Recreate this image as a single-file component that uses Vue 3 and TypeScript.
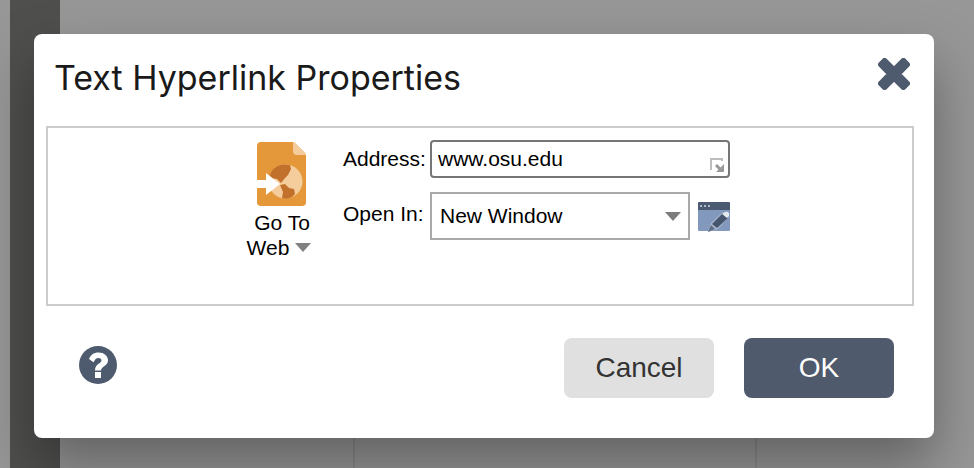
<script setup lang="ts">
import { ref } from 'vue'

const address = ref<string>('www.osu.edu')
const target = ref<string>('New Window')
const targets: string[] = ['New Window', 'Same Window']
</script>

<template>
  <div class="page">
    <div class="backdrop" aria-hidden="true">
      <div class="rail"></div>
      <div class="column first"></div>
      <div class="column second"></div>
      <div class="column last"></div>
    </div>

    <form class="dialog" role="dialog" aria-labelledby="dialog-title" @submit.prevent>
      <header class="header">
        <h1 id="dialog-title" class="title">Text Hyperlink Properties</h1>
        <button class="close" type="button" aria-label="Close">
          <svg width="32" height="32" viewBox="0 0 32 32">
            <path d="M6.500 3L16 12.300L25.500 3L29 6.500L19.700 16L29 25.500L25.500 29L16 19.700L6.500 29L3 25.500L12.300 16L3 6.500Z" fill="#4e5b6e" stroke="#4e5b6e" stroke-width="6" stroke-linejoin="round" />
          </svg>
        </button>
      </header>

      <section class="panel">
        <button class="action" type="button">
          <svg class="action-icon" width="50" height="64" viewBox="0 0 50 64">
            <path d="M4 0H37L49 12V60Q49 64 45 64H4Q0 64 0 60V4Q0 0 4 0Z" fill="#e5983a" />
            <path d="M36 0H37L49 12V13H40Q36 13 36 9Z" fill="#f5cc9b" />
            <circle cx="28.500" cy="39.500" r="17" fill="#f5cc9b" />
            <path d="M12 36C14 26 22 20.500 33 23L34 27L31 33L28 36L24 41L20 37Z" fill="#c1712b" />
            <path d="M23 43L28 42L32 46L37 47L38 52L35 55Q30 58 25 56L26 50Z" fill="#c1712b" />
            <path d="M0 38H9V31L23 42L9 53V46H0Z" fill="#fff" />
          </svg>
          <span>Go To</span>
          <span class="action-line">Web
            <svg width="16" height="9" viewBox="0 0 16 9"><path d="M0 0H16L8 9Z" fill="#808080" /></svg>
          </span>
        </button>

        <div class="fields">
          <div class="field">
            <label for="address">Address:</label>
            <div class="address-box">
              <input id="address" v-model="address" type="text" />
              <svg class="grip" width="16" height="16" viewBox="0 0 16 16">
                <path d="M2 13V2H13V4" stroke="#bdbdbd" stroke-width="2" fill="none" />
                <path d="M7 8L12 13" stroke="#999" stroke-width="3" />
                <path d="M15 7V15H7Z" fill="#999" />
              </svg>
            </div>
          </div>
          <div class="field open">
            <label for="open-in">Open In:</label>
            <div class="select-box">
              <select id="open-in" v-model="target">
                <option v-for="item in targets" :key="item">{{ item }}</option>
              </select>
              <svg class="arrow" width="16" height="9" viewBox="0 0 16 9"><path d="M0 0H16L8 9Z" fill="#7c7c7c" /></svg>
            </div>
            <button class="edit" type="button" aria-label="Edit window">
              <svg width="32" height="32" viewBox="0 0 32 32">
                <rect y="1" width="32" height="29" rx="1" fill="#8299bd" />
                <path d="M1 1H31L32 2V9H0V2Z" fill="#4b5a70" />
                <path d="M2 4H4V6H2ZM6 4H8V6H6ZM10 4H12V6H10Z" fill="#aeb8c8" />
                <path d="M13 22L25 11L31 16L20 28L10 31Z" fill="#a9b7cd" />
                <path d="M14 23L25 12L30 17L19 27Z" fill="#46566e" />
                <path d="M10 31L13 24L17 28Z" fill="#5e6d83" />
                <path d="M24 13L27 11Q29 10 31 12L31 15L29 17Z" fill="#e5e8ed" />
              </svg>
            </button>
          </div>
        </div>
      </section>

      <footer class="footer">
        <button class="help" type="button" aria-label="Help">
          <svg width="38" height="38" viewBox="0 0 38 38">
            <circle cx="19" cy="19" r="19" fill="#4e5b6e" />
            <path d="M10 13C12 8.500 15 6.500 19.500 6.500C25 6.500 29 10 29 14.500C29 20 22 20.500 22 24.500H16C16 17.500 22.500 17.500 22.500 14.500C22.500 13 21.500 12 19.300 12C17.300 12 16 13.500 14.500 16.300Z" fill="#fff" />
            <path d="M16 26H22V32H16Z" fill="#fff" />
          </svg>
        </button>
        <button class="button cancel" type="button">Cancel</button>
        <button class="button ok" type="submit">OK</button>
      </footer>
    </form>
  </div>
</template>

<style>
body {
  margin: 0;
}
</style>

<style scoped>
.page {
  position: relative;
  box-sizing: border-box;
  min-height: 100vh;
  padding: 34px 40px 30px 34px;
  overflow: hidden;
  font-family: "Liberation Sans", Arial, sans-serif;
  font-size: 21px;
  line-height: 25px;
  color: #000;
}

.backdrop {
  position: absolute;
  inset: 0;
  display: flex;
  align-items: flex-end;
  padding-left: 10px;
  background: #979797;
}

.rail {
  width: 50px;
  height: 100%;
  background: #4f504e;
}

.column {
  box-sizing: border-box;
  height: 50%;
  border-right: 2px solid #8b8b8b;
}

.first {
  flex: 294;
}

.second {
  flex: 402;
}

.last {
  flex: 218;
  border-right: 0;
}

.dialog {
  position: relative;
  box-sizing: border-box;
  padding: 24px 20px 40px 12px;
  border-radius: 8px;
  background: #fff;
  box-shadow: 0 28px 56px rgba(0, 0, 0, 0.35);
}

button {
  padding: 0;
  border: 0;
  background: none;
  color: inherit;
  font: inherit;
  cursor: pointer;
}

svg {
  display: block;
}

.header {
  display: flex;
  align-items: flex-start;
  justify-content: space-between;
  height: 68px;
  padding: 0 4px 0 8px;
}

.title {
  margin: 0;
  font-family: Inter, sans-serif;
  font-size: 34px;
  font-weight: 400;
  line-height: 40px;
  color: #1a1a1a;
}

.panel {
  display: flex;
  box-sizing: border-box;
  min-height: 180px;
  padding: 12px 0 0 198px;
  border: 2px solid #ccc;
}

.action {
  display: flex;
  flex-direction: column;
  align-items: center;
  align-self: flex-start;
  width: 72px;
  padding-top: 2px;
}

.action-icon {
  margin-bottom: 4px;
}

.action-line {
  display: flex;
  align-items: center;
  gap: 6px;
  padding-right: 6px;
}

.fields {
  display: flex;
  flex-direction: column;
  gap: 14px;
  margin-left: 25px;
}

.field {
  display: flex;
  align-items: flex-start;
}

.field label {
  width: 87px;
  padding-top: 6px;
}

.open label {
  padding-top: 9px;
}

.address-box,
.select-box {
  position: relative;
}

input,
select {
  display: block;
  box-sizing: border-box;
  margin: 0;
  background: #fff;
  color: #000;
  font: inherit;
}

input {
  width: 300px;
  height: 38px;
  padding: 0 28px 0 6px;
  border: 2px solid #767676;
  border-radius: 4px;
}

select {
  width: 260px;
  height: 48px;
  padding: 0 32px 2px 8px;
  border: 2px solid #a9a9a9;
  border-radius: 0;
  appearance: none;
}

.grip {
  position: absolute;
  right: 5px;
  bottom: 5px;
}

.arrow {
  position: absolute;
  top: 20px;
  right: 9px;
  pointer-events: none;
}

.edit {
  margin: 9px 0 0 8px;
}

.footer {
  display: flex;
  align-items: center;
  gap: 30px;
  padding: 32px 20px 0 33px;
}

.help {
  margin: 0 auto 6px 0;
}

.button {
  width: 150px;
  height: 60px;
  padding-bottom: 2px;
  border-radius: 8px;
  font-size: 28px;
}

.cancel {
  background: #e0e0e0;
  color: #333;
}

.ok {
  background: #4f5a6c;
  color: #fff;
}
</style>
